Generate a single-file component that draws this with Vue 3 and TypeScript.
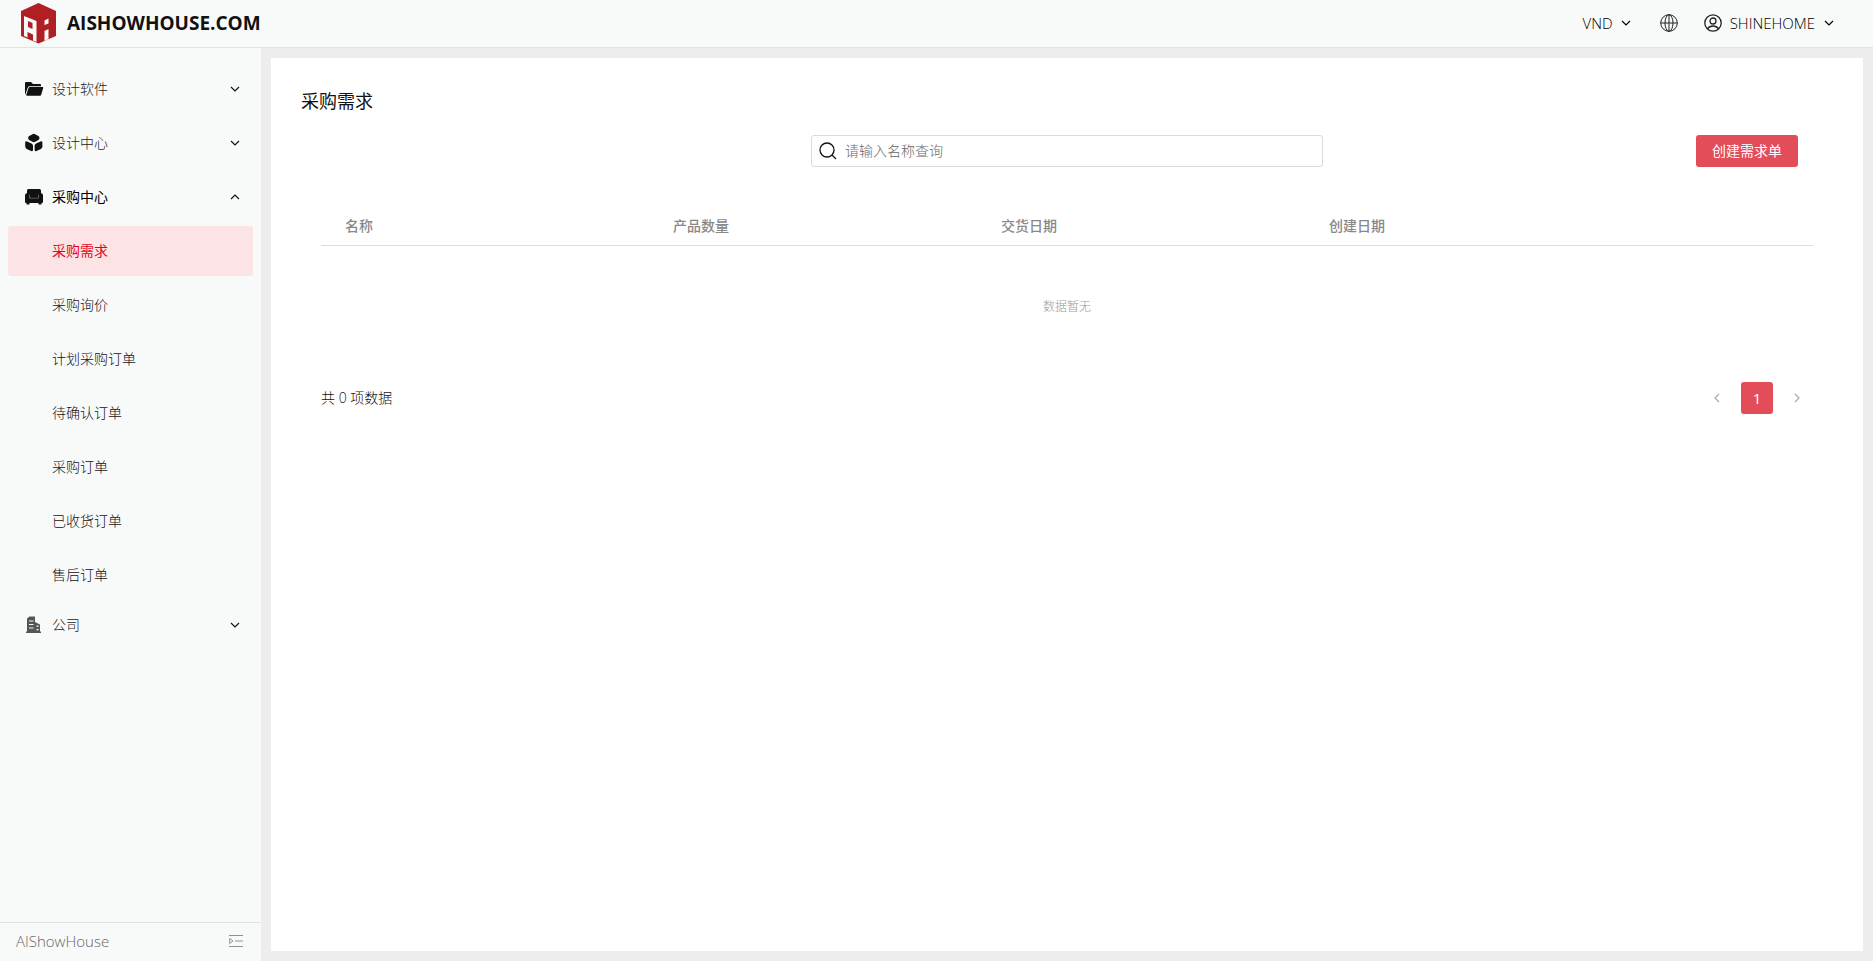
<script setup lang="ts">
import { ref } from 'vue'

interface SubItem {
  label: string
}

interface Group {
  label: string
  icon: 'folder' | 'cubes' | 'sofa' | 'building'
  children: SubItem[]
}

const groups: Group[] = [
  { label: '设计软件', icon: 'folder', children: [] },
  { label: '设计中心', icon: 'cubes', children: [] },
  {
    label: '采购中心',
    icon: 'sofa',
    children: [
      { label: '采购需求' },
      { label: '采购询价' },
      { label: '计划采购订单' },
      { label: '待确认订单' },
      { label: '采购订单' },
      { label: '已收货订单' },
      { label: '售后订单' },
    ],
  },
  { label: '公司', icon: 'building', children: [] },
]

const openGroup = ref('采购中心')
const activeItem = ref('采购需求')
const keyword = ref('')
const columns: string[] = ['名称', '产品数量', '交货日期', '创建日期']
const total = ref(0)

function toggle(label: string): void {
  openGroup.value = openGroup.value === label ? '' : label
}
</script>

<template>
  <div class="app">
    <header class="topbar">
      <a class="brand" href="#">
        <svg class="logo" viewBox="0 0 36 42" aria-hidden="true">
          <path fill="#b01f24" d="M18.500 1 36 9v25L18.500 41.500 1 34V9z" />
          <path fill="#f8faf9" fill-rule="evenodd" d="M4 14l12.500 5v21L13 38.500v-6L7.500 30v5.500L4 34zM8 19v6l4.500 2v-6z" />
          <path fill="#f8faf9" d="M24.500 18.500l4-2v5l-4 1.500zM24.500 29l4-2v10l-4 2z" />
        </svg>
        <span>AISHOWHOUSE.COM</span>
      </a>
      <div class="tools">
        <button class="tool" type="button">
          VND
          <svg class="chevron" viewBox="0 0 12 12" aria-hidden="true"><path d="M2 4l4 4 4-4" /></svg>
        </button>
        <button class="tool" type="button" aria-label="语言">
          <svg class="round" viewBox="0 0 18 18" aria-hidden="true">
            <circle cx="9" cy="9" r="8.300" />
            <ellipse cx="9" cy="9" rx="4" ry="8.300" />
            <path d="M9 .700v16.600M.700 9h16.600" />
          </svg>
        </button>
        <button class="tool user" type="button">
          <svg class="round bold" viewBox="0 0 18 18" aria-hidden="true">
            <circle cx="9" cy="9" r="8.200" />
            <circle cx="9" cy="7" r="3" />
            <path d="M3.300 14.800c1.400-2 3.300-2.800 5.700-2.800s4.300.8 5.700 2.800" />
          </svg>
          SHINEHOME
          <svg class="chevron" viewBox="0 0 12 12" aria-hidden="true"><path d="M2 4l4 4 4-4" /></svg>
        </button>
      </div>
    </header>

    <div class="body">
      <aside class="sidebar">
        <nav class="menu">
          <div v-for="group in groups" :key="group.label" class="group">
            <button
              class="row"
              :class="{ open: openGroup === group.label }"
              type="button"
              :aria-expanded="openGroup === group.label"
              @click="toggle(group.label)"
            >
              <svg v-if="group.icon === 'folder'" class="icon" viewBox="0 0 20 20" aria-hidden="true">
                <path d="M1 15.500V4q0-1 1-1h5l2 2h7q1 0 1 1v1.200H5.500q-1.200 0-1.700 1.200L1.500 15z" />
                <path d="M5.800 8H18.500q1 0 .7 1l-2 6.800q-.3 1-1.300 1H3q-1 0-.7-1l2.200-6.800Q4.800 8 5.800 8z" />
              </svg>
              <svg v-else-if="group.icon === 'cubes'" class="icon" viewBox="0 0 20 20" aria-hidden="true">
                <path d="M8.500 1.200q1.300-.7 2.600 0l3.300 1.700q1 .6 1 1.500v1.200q0 .9-1 1.500l-3.200 1.700q-1.400.7-2.800 0L5.200 7.100q-1-.6-1-1.500V4.400q0-.9 1-1.500z" />
                <path d="M1.200 9.700q0-2 1.900-1.200l4.400 2.100q1.500.8 1.500 2.200v4q0 2-1.900 1.200l-4.400-2.100q-1.500-.8-1.500-2.300z" />
                <path d="M18.400 9.700q0-2-1.900-1.200l-4.400 2.100q-1.500.8-1.500 2.200v4q0 2 1.900 1.200l4.400-2.100q1.500-.8 1.500-2.300z" />
              </svg>
              <svg v-else-if="group.icon === 'sofa'" class="icon" viewBox="0 0 20 20" aria-hidden="true">
                <path d="M3 6.200V3.500Q3 2 4.500 2h11Q17 2 17 3.500v2.700h.5Q19 6.500 19 8.300V15q0 .9-1 .9h-.5v1.600h-3v-1.600h-9v1.600h-3v-1.600H2q-1 0-1-.9V8.300q0-1.800 1.500-2.100z" />
                <path fill="none" stroke="#888" stroke-width=".6" d="M5.500 7.500v3.700h9V7.500" />
              </svg>
              <svg v-else class="icon grey" viewBox="0 0 20 20" aria-hidden="true">
                <path fill-rule="evenodd" d="M2 16.500h1V3.500L5.500 1.500H11V7l5 2.500v7h1V18H2zM5 5.500v1h4.500v-1zm0 3.500v1h4.500V9zm0 3.500v1h4.500v-1zm7.500-2v1.200h2v-1.200zm0 3.500v1.200h2V14z" />
              </svg>
              <span class="label">{{ group.label }}</span>
              <svg class="chevron" viewBox="0 0 12 12" aria-hidden="true">
                <path :d="openGroup === group.label ? 'M2 8l4-4 4 4' : 'M2 4l4 4 4-4'" />
              </svg>
            </button>
            <div v-if="group.children.length && openGroup === group.label" class="sub">
              <a
                v-for="item in group.children"
                :key="item.label"
                class="subitem"
                :class="{ active: activeItem === item.label }"
                href="#"
                @click.prevent="activeItem = item.label"
              >{{ item.label }}</a>
            </div>
          </div>
        </nav>
        <footer class="foot">
          <span>AIShowHouse</span>
          <button class="collapse" type="button" aria-label="收起菜单">
            <svg viewBox="0 0 14 14" aria-hidden="true">
              <path d="M0 1.500h14M6 7h8M0 12.500h14" />
              <path d="M.700 4.500v5L4 7z" />
            </svg>
          </button>
        </footer>
      </aside>

      <main class="panel">
        <h1>采购需求</h1>
        <div class="bar">
          <label class="search">
            <svg viewBox="0 0 18 18" aria-hidden="true">
              <circle cx="8" cy="8" r="7" />
              <path d="M13 13l4 4" />
            </svg>
            <input v-model="keyword" type="text" placeholder="请输入名称查询" aria-label="请输入名称查询" />
          </label>
          <button class="create" type="button">创建需求单</button>
        </div>
        <div class="content">
          <table>
            <thead>
              <tr>
                <th v-for="column in columns" :key="column" scope="col">{{ column }}</th>
                <td class="actions"></td>
              </tr>
            </thead>
            <tbody>
              <tr>
                <td class="empty" :colspan="columns.length + 1">数据暂无</td>
              </tr>
            </tbody>
          </table>
          <div class="pager">
            <span>共 {{ total }} 项数据</span>
            <div class="pages">
              <button type="button" aria-label="上一页" disabled>
                <svg class="chevron" viewBox="0 0 12 12" aria-hidden="true"><path d="M8 2L4 6l4 4" /></svg>
              </button>
              <button class="current" type="button" aria-current="page">1</button>
              <button type="button" aria-label="下一页" disabled>
                <svg class="chevron" viewBox="0 0 12 12" aria-hidden="true"><path d="M4 2l4 4-4 4" /></svg>
              </button>
            </div>
          </div>
        </div>
      </main>
    </div>
  </div>
</template>

<style>
body {
  margin: 0;
}
</style>

<style scoped>
.app {
  display: flex;
  flex-direction: column;
  min-height: 100vh;
  background: #ededed;
  color: #111;
  font: 300 14px/20px "Open Sans", "Noto Sans CJK SC", sans-serif;
}
.app * {
  box-sizing: border-box;
}
button {
  margin: 0;
  padding: 0;
  border: 0;
  background: none;
  color: inherit;
  font: inherit;
  cursor: pointer;
}
a {
  color: inherit;
  text-decoration: none;
}
svg {
  display: block;
  flex: none;
}
.chevron {
  width: 12px;
  height: 12px;
  fill: none;
  stroke: currentColor;
  stroke-width: 1.200;
}
.topbar {
  display: flex;
  justify-content: space-between;
  align-items: center;
  height: 48px;
  padding: 0 38px 1px 20px;
  border-bottom: 1px solid #e0e4e3;
  background: #f8faf9;
}
.brand {
  display: flex;
  align-items: center;
  gap: 11px;
  font-size: 19px;
  font-weight: 700;
}
.logo {
  width: 36px;
  height: 42px;
}
.tools {
  display: flex;
  align-items: center;
  gap: 28px;
  color: #000;
  font-size: 15px;
}
.tool {
  display: flex;
  align-items: center;
  gap: 7px;
}
.user {
  gap: 8px;
  margin-left: -2px;
}
.round {
  width: 18px;
  height: 18px;
  fill: none;
  stroke: #222;
  stroke-width: 1;
}
.round.bold {
  stroke-width: 1.300;
}
.body {
  display: flex;
  flex: 1;
}
.sidebar {
  display: flex;
  flex-direction: column;
  flex: none;
  width: 261px;
  background: #f8faf9;
}
.menu {
  flex: 1;
  padding: 16px 8px;
}
.row {
  display: flex;
  align-items: center;
  width: 100%;
  height: 50px;
  margin-bottom: 4px;
  padding: 0 12px 0 16px;
  color: #222;
}
.row.open {
  color: #000;
  font-weight: 400;
}
.icon {
  width: 20px;
  height: 20px;
  fill: #111;
}
.icon.grey {
  fill: #555;
}
.label {
  flex: 1;
  margin-left: 8px;
  text-align: left;
}
.row .chevron {
  color: #111;
}
.sub {
  display: flex;
  flex-direction: column;
  gap: 4px;
}
.subitem {
  height: 50px;
  padding-left: 44px;
  border-radius: 3px;
  color: #111;
  line-height: 50px;
}
.subitem.active {
  background: #fce4e6;
  color: #e60023;
  font-weight: 400;
}
.foot {
  display: flex;
  justify-content: space-between;
  align-items: center;
  height: 39px;
  padding: 0 18px 2px 16px;
  border-top: 1px solid #dfe2e1;
  color: #666;
  font-size: 15px;
}
.collapse svg {
  width: 14px;
  height: 14px;
  fill: none;
  stroke: #8f9290;
}
.panel {
  flex: 1;
  margin: 10px;
  padding: 29px 50px;
  background: #fff;
}
h1 {
  margin: 0 -20px;
  font-size: 18px;
  font-weight: 400;
  line-height: 28px;
}
.bar {
  display: grid;
  grid-template-columns: 1fr 512px 1fr;
  align-items: center;
  margin-top: 20px;
}
.search {
  display: flex;
  align-items: center;
  grid-column: 2;
  gap: 8px;
  height: 32px;
  padding: 0 7px;
  border: 1px solid #d9dadb;
  border-radius: 3px;
}
.search svg {
  width: 18px;
  height: 18px;
  fill: none;
  stroke: #111;
  stroke-width: 1.300;
}
.search input {
  flex: 1;
  min-width: 0;
  padding: 0;
  border: 0;
  outline: 0;
  background: none;
  color: #333;
  font: inherit;
}
.search input::placeholder {
  color: #666;
}
.create {
  justify-self: end;
  height: 32px;
  margin-right: 15px;
  padding: 0 16px;
  border-radius: 3px;
  background: #e34d59;
  color: #fff;
  font-weight: 400;
}
table {
  width: 100%;
  margin-top: 38px;
  border-collapse: collapse;
  table-layout: fixed;
}
th {
  height: 40px;
  padding: 2px 24px 0;
  border-bottom: 1px solid #dcdcdc;
  color: #888;
  font-weight: 500;
  text-align: left;
}
.actions {
  width: 180px;
  border-bottom: 1px solid #dcdcdc;
}
.empty {
  height: 124px;
  color: #999;
  font-size: 12px;
  text-align: center;
}
.pager {
  display: flex;
  justify-content: space-between;
  align-items: center;
  margin-top: 13px;
  color: #111;
}
.pages {
  display: flex;
  gap: 8px;
}
.pages button {
  display: grid;
  place-items: center;
  width: 32px;
  height: 32px;
  border-radius: 3px;
  color: #aaa;
}
.pages .current {
  background: #e34d59;
  color: #fff;
  font-size: 15px;
  font-weight: 400;
}
</style>
